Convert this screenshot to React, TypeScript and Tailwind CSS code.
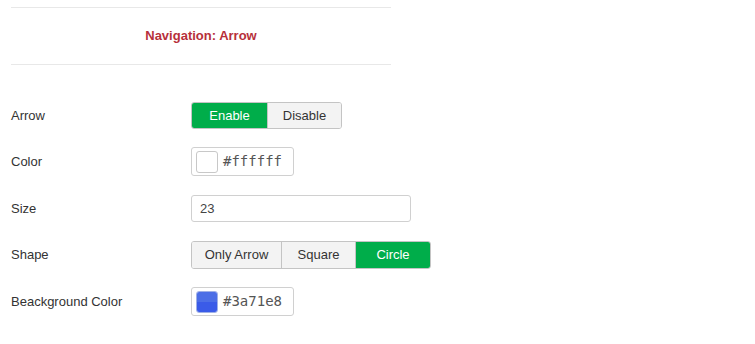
const SANS = { fontFamily: '"Liberation Sans", Arial, sans-serif' };

function Label({ children }: { children: React.ReactNode }) {
  return <div className="w-[180px] shrink-0 text-[13px] text-[#333]">{children}</div>;
}

function Toggle({
  options,
  active,
  h,
}: {
  options: { label: string; w: string }[];
  active: string;
  h: string;
}) {
  return (
    <div className={`flex ${h} overflow-hidden rounded-[3px] border border-[#c4c4c4]`}>
      {options.map((o, i) => {
        const on = o.label === active;
        return (
          <div
            key={o.label}
            className={`flex items-center justify-center text-[13px] ${o.w} ${
              i > 0 ? "border-l border-[#c4c4c4]" : ""
            } ${on ? "bg-[#00ad4a] text-white border-[#00ad4a]" : "bg-[#f3f3f3] text-[#333]"}`}
          >
            {o.label}
          </div>
        );
      })}
    </div>
  );
}

function ColorInput({ value, swatch }: { value: string; swatch: "white" | "blue" }) {
  return (
    <div className="flex h-[29px] w-[103px] items-center gap-[5px] rounded-[3px] border border-[#d0d0d0] bg-white pl-[4px]">
      {swatch === "white" ? (
        <span className="h-[22px] w-[22px] rounded-[3px] border border-[#c8c8c8] bg-white" />
      ) : (
        <span className="flex h-[22px] w-[22px] flex-col overflow-hidden rounded-[3px] border border-[#9fb0e6]">
          <span className="h-1/2 bg-[#4c6ee6]" />
          <span className="h-1/2 bg-[#3a5be8]" />
        </span>
      )}
      <span
        className="text-[14px] text-[#555]"
        style={{ fontFamily: '"DejaVu Sans Mono", "Liberation Mono", monospace' }}
      >
        {value}
      </span>
    </div>
  );
}

export default function App() {
  return (
    <div className="h-[344px] w-[755px] bg-white" style={SANS}>
      <div className="pt-[7px] pl-[11px] w-[391px]">
        <div className="border-t border-[#e8e8e8]" />
        <div className="flex h-[56px] items-center justify-center text-[13px] font-bold text-[#b7303a]">
          Navigation: Arrow
        </div>
        <div className="border-t border-[#e8e8e8]" />
      </div>

      <div className="flex flex-col pl-[11px] pt-[37px]">
        <div className="flex items-center">
          <Label>Arrow</Label>
          <Toggle
            h="h-[27px]"
            active="Enable"
            options={[
              { label: "Enable", w: "w-[75px]" },
              { label: "Disable", w: "w-[74px]" },
            ]}
          />
        </div>
        <div className="mt-[18px] flex items-center">
          <Label>Color</Label>
          <ColorInput value="#ffffff" swatch="white" />
        </div>
        <div className="mt-[19px] flex items-center">
          <Label>Size</Label>
          <div className="flex h-[27px] w-[220px] items-center rounded-[3px] border border-[#d0d0d0] px-[8px] text-[13px] text-[#444]">
            23
          </div>
        </div>
        <div className="mt-[19px] flex items-center">
          <Label>Shape</Label>
          <Toggle
            h="h-[28px]"
            active="Circle"
            options={[
              { label: "Only Arrow", w: "w-[89px]" },
              { label: "Square", w: "w-[74px]" },
              { label: "Circle", w: "w-[75px]" },
            ]}
          />
        </div>
        <div className="mt-[18px] flex items-center">
          <Label>Beackground Color</Label>
          <ColorInput value="#3a71e8" swatch="blue" />
        </div>
      </div>
    </div>
  );
}
